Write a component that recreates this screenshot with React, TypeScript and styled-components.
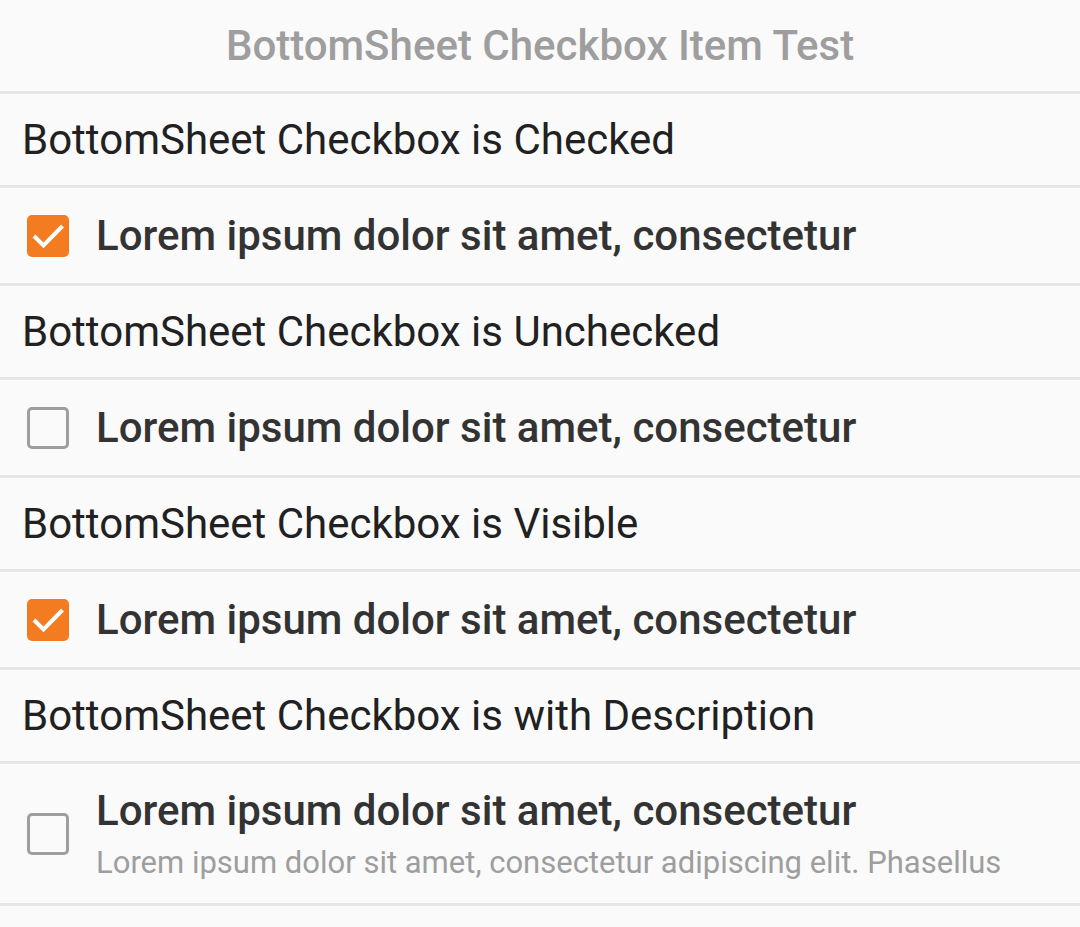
import styled, { createGlobalStyle } from "styled-components";

const GlobalStyle = createGlobalStyle`
    html, body {
        margin: 0;
        padding: 0;
        background-color: #fafafa;
    }
    body {
        font-family: Roboto, "Noto Sans", sans-serif;
    }
`;

const Page = styled.div`
    width: 1080px;
    min-height: 927px;
    background-color: #fafafa;
`;

const Header = styled.div`
    height: 91px;
    display: flex;
    align-items: center;
    justify-content: center;
    font-size: 42px;
    font-weight: 500;
    color: #9e9e9e;
    border-bottom: 3px solid #e6e6e6;
`;

const SectionTitle = styled.div`
    height: 91px;
    display: flex;
    align-items: center;
    padding-left: 22px;
    font-size: 42px;
    color: #212121;
    border-bottom: 3px solid #e6e6e6;
`;

const Item = styled.div<{ tall?: boolean }>`
    height: ${(props) => (props.tall ? "139px" : "95px")};
    display: flex;
    align-items: center;
    padding-left: 27px;
    gap: 27px;
    border-bottom: 3px solid #e6e6e6;
`;

const Box = styled.span<{ checked: boolean }>`
    width: 42px;
    height: 42px;
    box-sizing: border-box;
    border-radius: 5px;
    flex-shrink: 0;
    display: flex;
    align-items: center;
    justify-content: center;
    background-color: ${(props) => (props.checked ? "#f47c20" : "transparent")};
    border: ${(props) => (props.checked ? "none" : "3px solid #9e9e9e")};
`;

const Texts = styled.div`
    display: flex;
    flex-direction: column;
`;

const Label = styled.div`
    font-size: 42px;
    font-weight: 500;
    color: #333333;
`;

const Description = styled.div`
    font-size: 31px;
    color: #9e9e9e;
    margin-top: 9px;
`;

const lorem = "Lorem ipsum dolor sit amet, consectetur";

const Checkbox = ({ checked }: { checked: boolean }) => (
    <Box checked={checked}>
        {checked && (
            <svg width="42" height="42" viewBox="0 0 42 42">
                <path
                    d="M7 21 L16.5 30.5 L35.5 11"
                    fill="none"
                    stroke="#ffffff"
                    strokeWidth="4"
                />
            </svg>
        )}
    </Box>
);

const App = () => {
    return (
        <Page>
            <GlobalStyle />
            <Header>BottomSheet Checkbox Item Test</Header>

            <SectionTitle>BottomSheet Checkbox is Checked</SectionTitle>
            <Item>
                <Checkbox checked={true} />
                <Label>{lorem}</Label>
            </Item>

            <SectionTitle>BottomSheet Checkbox is Unchecked</SectionTitle>
            <Item>
                <Checkbox checked={false} />
                <Label>{lorem}</Label>
            </Item>

            <SectionTitle>BottomSheet Checkbox is Visible</SectionTitle>
            <Item>
                <Checkbox checked={true} />
                <Label>{lorem}</Label>
            </Item>

            <SectionTitle>BottomSheet Checkbox is with Description</SectionTitle>
            <Item tall>
                <Checkbox checked={false} />
                <Texts>
                    <Label>{lorem}</Label>
                    <Description>
                        Lorem ipsum dolor sit amet, consectetur adipiscing elit.
                        Phasellus
                    </Description>
                </Texts>
            </Item>
        </Page>
    );
};

export default App;
